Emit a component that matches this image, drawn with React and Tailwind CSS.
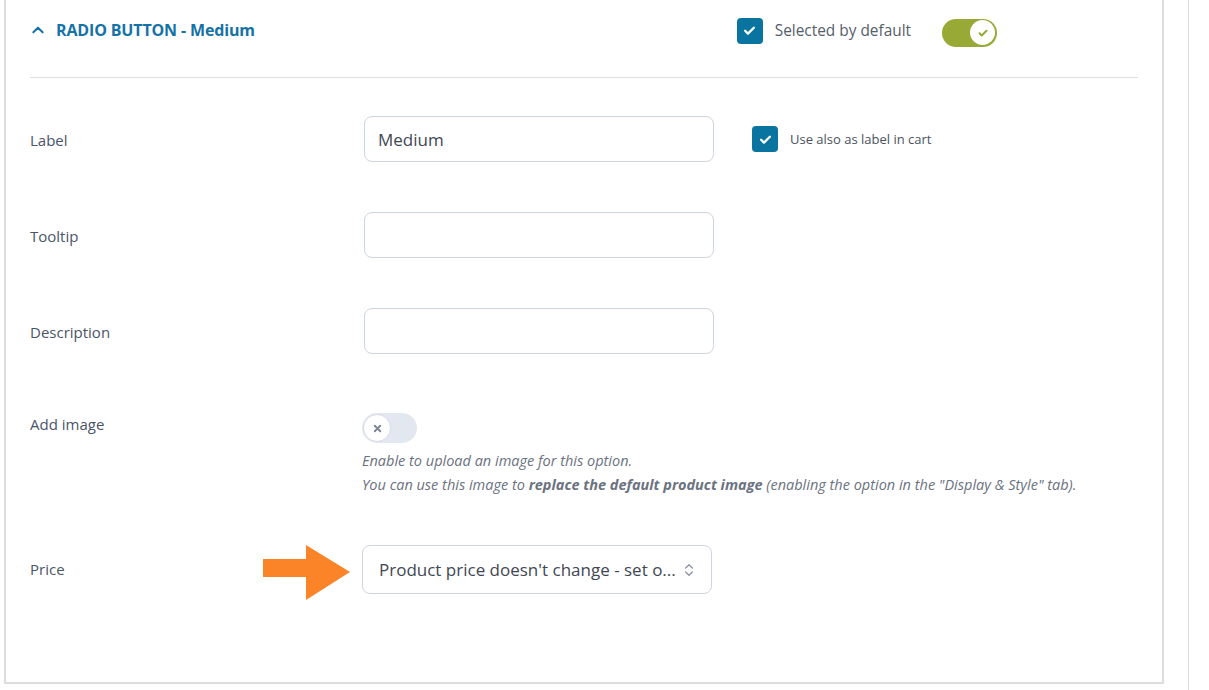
import { useState } from "react";

const font = { fontFamily: '"Open Sans", "Noto Sans", sans-serif' };

function CheckBox({ size = "w-[26px] h-[26px]" }) {
  return (
    <span className={`${size} rounded-[4px] bg-[#0a74a0] flex items-center justify-center shrink-0`}>
      <svg viewBox="0 0 24 24" className="w-[15px] h-[15px]" fill="none" stroke="white" strokeWidth="3.6" strokeLinecap="round" strokeLinejoin="round">
        <path d="M5 12.5l4.5 4.5L19 7.5" />
      </svg>
    </span>
  );
}

function Row({ label, children, labelClass = "" }) {
  return (
    <div className="flex">
      <div className={`w-[334px] shrink-0 text-[15px] text-[#4a5568] ${labelClass}`}>{label}</div>
      <div className="flex-1">{children}</div>
    </div>
  );
}

export default function App() {
  const [selected, setSelected] = useState(true);

  return (
    <div className="w-[1209px] h-[690px] bg-white overflow-hidden flex" style={font}>
      {/* pannello opzione */}
      <div className="ml-[4px] w-[1160px] h-[684px] border-l-2 border-r-2 border-b-2 border-[#dcdcdc] px-[24px] flex flex-col">
        {/* intestazione */}
        <div className="h-[78px] flex items-center border-b border-[#dedede]">
          <div className="flex items-center text-[#1472a6] font-bold text-[16px] pb-[17px] gap-[11px] pl-[1px]">
            <svg viewBox="0 0 24 24" className="w-[14px] h-[14px]" fill="none" stroke="#1472a6" strokeWidth="3.5" strokeLinecap="round" strokeLinejoin="round">
              <path d="M4 16l8-8 8 8" />
            </svg>
            <span className="tracking-[-0.15px]">RADIO BUTTON - Medium</span>
          </div>
          <div className="ml-auto mr-[141px] flex items-center pb-[16px]">
            <CheckBox />
            <span className="ml-[12px] text-[15.4px] text-[#555e6b]">Selected by default</span>
            <button
              onClick={() => setSelected(!selected)}
              className="ml-[31px] w-[55px] h-[28px] rounded-full bg-[#98aa35] flex items-center justify-end pr-[2px] mt-[4px]"
            >
              <span className="w-[25px] h-[25px] rounded-full bg-white flex items-center justify-center">
                <svg viewBox="0 0 24 24" className="w-[12px] h-[12px]" fill="none" stroke="#98aa35" strokeWidth="4" strokeLinecap="round" strokeLinejoin="round">
                  <path d="M5 12.5l4.5 4.5L19 7.5" />
                </svg>
              </span>
            </button>
          </div>
        </div>

        {/* campi */}
        <div className="flex flex-col pt-[38px]">
          <Row label="Label" labelClass="pt-[13px]">
            <div className="flex items-center">
              <div className="w-[350px] h-[46px] rounded-[8px] border border-[#cdd5e0] flex items-center px-[13px] pt-[2px] text-[17px] text-[#3f4753]">
                Medium
              </div>
              <div className="ml-[38px] flex items-center">
                <CheckBox />
                <span className="ml-[12px] text-[13px] text-[#4a5260] pt-[2px]">Use also as label in cart</span>
              </div>
            </div>
          </Row>

          <div className="h-[50px]" />
          <Row label="Tooltip" labelClass="pt-[13px]">
            <div className="w-[350px] h-[46px] rounded-[8px] border border-[#cdd5e0]" />
          </Row>

          <div className="h-[50px]" />
          <Row label="Description" labelClass="pt-[13px]">
            <div className="w-[350px] h-[46px] rounded-[8px] border border-[#cdd5e0]" />
          </Row>

          <div className="h-[59px]" />
          <Row label="Add image" labelClass="pt-[1px] -mt-[1px]">
            <div className="-ml-[2px]">
              <div className="w-[55px] h-[30px] rounded-full bg-[#e3e8f0] flex items-center pl-[1px]">
                <span className="w-[28px] h-[28px] rounded-full bg-white border border-[#d6dce6] flex items-center justify-center">
                  <svg viewBox="0 0 24 24" className="w-[11px] h-[11px]" fill="none" stroke="#7a8294" strokeWidth="4" strokeLinecap="round">
                    <path d="M6 6l12 12M18 6L6 18" />
                  </svg>
                </span>
              </div>
              <p className="mt-[6px] text-[14.5px] italic text-[#6b7280] leading-[24px]">
                Enable to upload an image for this option.
                <br />
                You can use this image to <b className="font-bold">replace the default product image</b> (enabling the option in the "Display &amp; Style" tab).
              </p>
            </div>
          </Row>

          <div className="h-[41px]" />
          <div className="flex items-center">
            <div className="w-[233px] shrink-0 text-[15px] text-[#4a5568]">Price</div>
            <svg width="88" height="56" viewBox="0 0 88 56" className="shrink-0 mt-[7px]">
              <path d="M0 14h43V0l44 27-44 28V32H0z" fill="#fb8429" />
            </svg>
            <div className="ml-[11px] w-[350px] h-[49px] rounded-[8px] border border-[#cdd5e0] flex items-center pl-[16px] pr-[14px] text-[17px] text-[#3f4753]">
              <span className="flex-1 whitespace-nowrap overflow-hidden">Product price doesn't change - set o...</span>
              <svg viewBox="0 0 24 24" className="w-[16px] h-[22px] ml-[6px]" fill="none" stroke="#8a93a3" strokeWidth="2" strokeLinecap="round" strokeLinejoin="round">
                <path d="M7 9l5-5 5 5M7 15l5 5 5-5" />
              </svg>
            </div>
          </div>
        </div>
      </div>

      {/* barra laterale */}
      <div className="ml-[24px] w-[1px] h-full bg-[#dcdcdc]" />
    </div>
  );
}
